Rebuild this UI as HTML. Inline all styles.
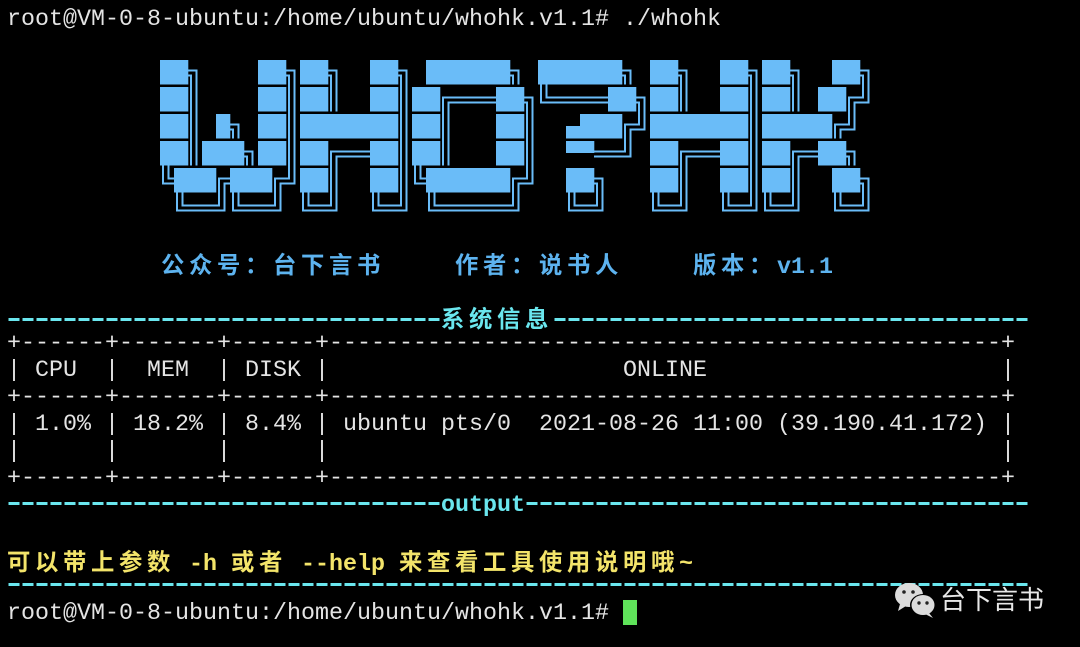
<!DOCTYPE html>
<html><head><meta charset="utf-8">
<style>
html,body{margin:0;padding:0;background:#000;width:1080px;height:647px;overflow:hidden}
#t{position:absolute;left:7px;top:6.5px;margin:0;font-family:"Liberation Mono","Noto Sans CJK SC",monospace;font-size:23.33px;color:#e4e4e4}
#t div{height:27px;line-height:27px;white-space:pre;overflow:visible}
.c{font-family:"Noto Sans CJK SC","WenQuanYi Zen Hei",sans-serif;letter-spacing:4.67px;line-height:27px}
.b{color:#5db3ef;font-weight:bold}
.cy{color:#6ae6ee;font-weight:bold}
.y{color:#f3e46a;font-weight:bold}
.d{display:inline-block;height:3px;vertical-align:middle;position:relative;top:-1px;background:repeating-linear-gradient(90deg,transparent 0 1.5px,#6ae6ee 1.5px 12.5px,transparent 12.5px 14px)}
#art{position:absolute;left:0;top:0}
#cur{position:absolute;left:623px;top:600px;width:14px;height:25px;background:#5fe35a}
#wm{position:absolute;left:892px;top:580px;width:160px;height:40px}
#wmt{position:absolute;left:940px;top:583px;font-family:"Noto Sans CJK SC",sans-serif;font-size:26px;color:#e8e8e8;line-height:32px}
</style></head><body>
<div id="t">
<div>root@VM-0-8-ubuntu:/home/ubuntu/whohk.v1.1# ./whohk</div>
<div></div><div></div><div></div><div></div><div></div><div></div><div></div><div></div>
<div class="b">           <span class="c">公众号：台下言书</span>     <span class="c">作者：说书人</span>     <span class="c">版本：</span>v1.1</div>
<div></div>
<div class="cy"><span class="d" style="width:434px"></span><span class="c">系统信息</span><span class="d" style="width:476px"></span></div>
<div>+------+-------+------+------------------------------------------------+</div>
<div>| CPU  |  MEM  | DISK |                     ONLINE                     |</div>
<div>+------+-------+------+------------------------------------------------+</div>
<div>| 1.0% | 18.2% | 8.4% | ubuntu pts/0  2021-08-26 11:00 (39.190.41.172) |</div>
<div>|      |       |      |                                                |</div>
<div>+------+-------+------+------------------------------------------------+</div>
<div class="cy"><span class="d" style="width:434px"></span>output<span class="d" style="width:504px"></span></div>
<div></div>
<div class="y"><span class="c">可以带上参数</span> -h <span class="c">或者</span> --help <span class="c">来查看工具使用说明哦</span>~</div>
<div class="cy"><span class="d" style="width:1022px"></span></div>
<div>root@VM-0-8-ubuntu:/home/ubuntu/whohk.v1.1# </div>
</div>
<div id="cur"></div>
<svg id="art" width="1080" height="260" xmlns="http://www.w3.org/2000/svg"></svg>
<svg id="wm" viewBox="0 0 160 40" xmlns="http://www.w3.org/2000/svg">
<ellipse cx="17" cy="15" rx="14" ry="12" fill="#dcdcdc"/>
<path d="M8 24 L6 31 L14 26 Z" fill="#dcdcdc"/>
<circle cx="12" cy="12" r="1.8" fill="#222"/><circle cx="21" cy="12" r="1.8" fill="#222"/>
<ellipse cx="31" cy="25" rx="13" ry="11" fill="#000"/>
<ellipse cx="31" cy="25" rx="11.5" ry="10" fill="#dcdcdc"/>
<path d="M37 33 L41 38 L33 34 Z" fill="#dcdcdc"/>
<circle cx="27" cy="23" r="1.7" fill="#222"/><circle cx="35" cy="23" r="1.7" fill="#222"/>
</svg>
<div id="wmt">台下言书</div>
<script>
var rows=[
"██╗    ██╗██╗  ██╗ ██████╗ ██████╗ ██╗  ██╗██╗  ██╗",
"██║    ██║██║  ██║██╔═══██╗╚════██╗██║  ██║██║ ██╔╝",
"██║ █╗ ██║███████║██║   ██║  ▄███╔╝███████║█████╔╝ ",
"██║███╗██║██╔══██║██║   ██║  ▀▀══╝ ██╔══██║██╔═██╗ ",
"╚███╔███╔╝██║  ██║╚██████╔╝  ██╗   ██║  ██║██║  ██╗",
" ╚══╝╚══╝ ╚═╝  ╚═╝ ╚═════╝   ╚═╝   ╚═╝  ╚═╝╚═╝  ╚═╝"];
var s='',col='#6abcf8';
function P(p){s+='<polyline points="'+p+'" fill="none" stroke="'+col+'" stroke-width="2"/>';}
for(var r=0;r<6;r++){var ch=Array.from(rows[r]);
for(var c=0;c<ch.length;c++){var x0=160+c*14,x1=x0+14,y0=57.5+r*27,y1=y0+27;
var v1=x0+3,v2=x0+8.5,h1=y0+13,h2=y0+18,k=ch[c];
if(k=='█')s+='<rect x="'+x0+'" y="'+(y0+2.5)+'" width="14.3" height="24.5" fill="'+col+'"/>';
else if(k=='▀')s+='<rect x="'+x0+'" y="'+(y0+2.5)+'" width="14.3" height="12" fill="'+col+'"/>';
else if(k=='▄')s+='<rect x="'+x0+'" y="'+(y0+14.5)+'" width="14.3" height="12.5" fill="'+col+'"/>';
else if(k=='═'){P(x0+','+h1+' '+x1+','+h1);P(x0+','+h2+' '+x1+','+h2);}
else if(k=='║'){P(v1+','+y0+' '+v1+','+y1);P(v2+','+y0+' '+v2+','+y1);}
else if(k=='╗'){P(x0+','+h1+' '+v2+','+h1+' '+v2+','+y1);P(x0+','+h2+' '+v1+','+h2+' '+v1+','+y1);}
else if(k=='╝'){P(x0+','+h2+' '+v2+','+h2+' '+v2+','+y0);P(x0+','+h1+' '+v1+','+h1+' '+v1+','+y0);}
else if(k=='╚'){P(x1+','+h2+' '+v1+','+h2+' '+v1+','+y0);P(x1+','+h1+' '+v2+','+h1+' '+v2+','+y0);}
else if(k=='╔'){P(x1+','+h1+' '+v1+','+h1+' '+v1+','+y1);P(x1+','+h2+' '+v2+','+h2+' '+v2+','+y1);}
}}
document.getElementById('art').innerHTML=s;
</script>
</body></html>
